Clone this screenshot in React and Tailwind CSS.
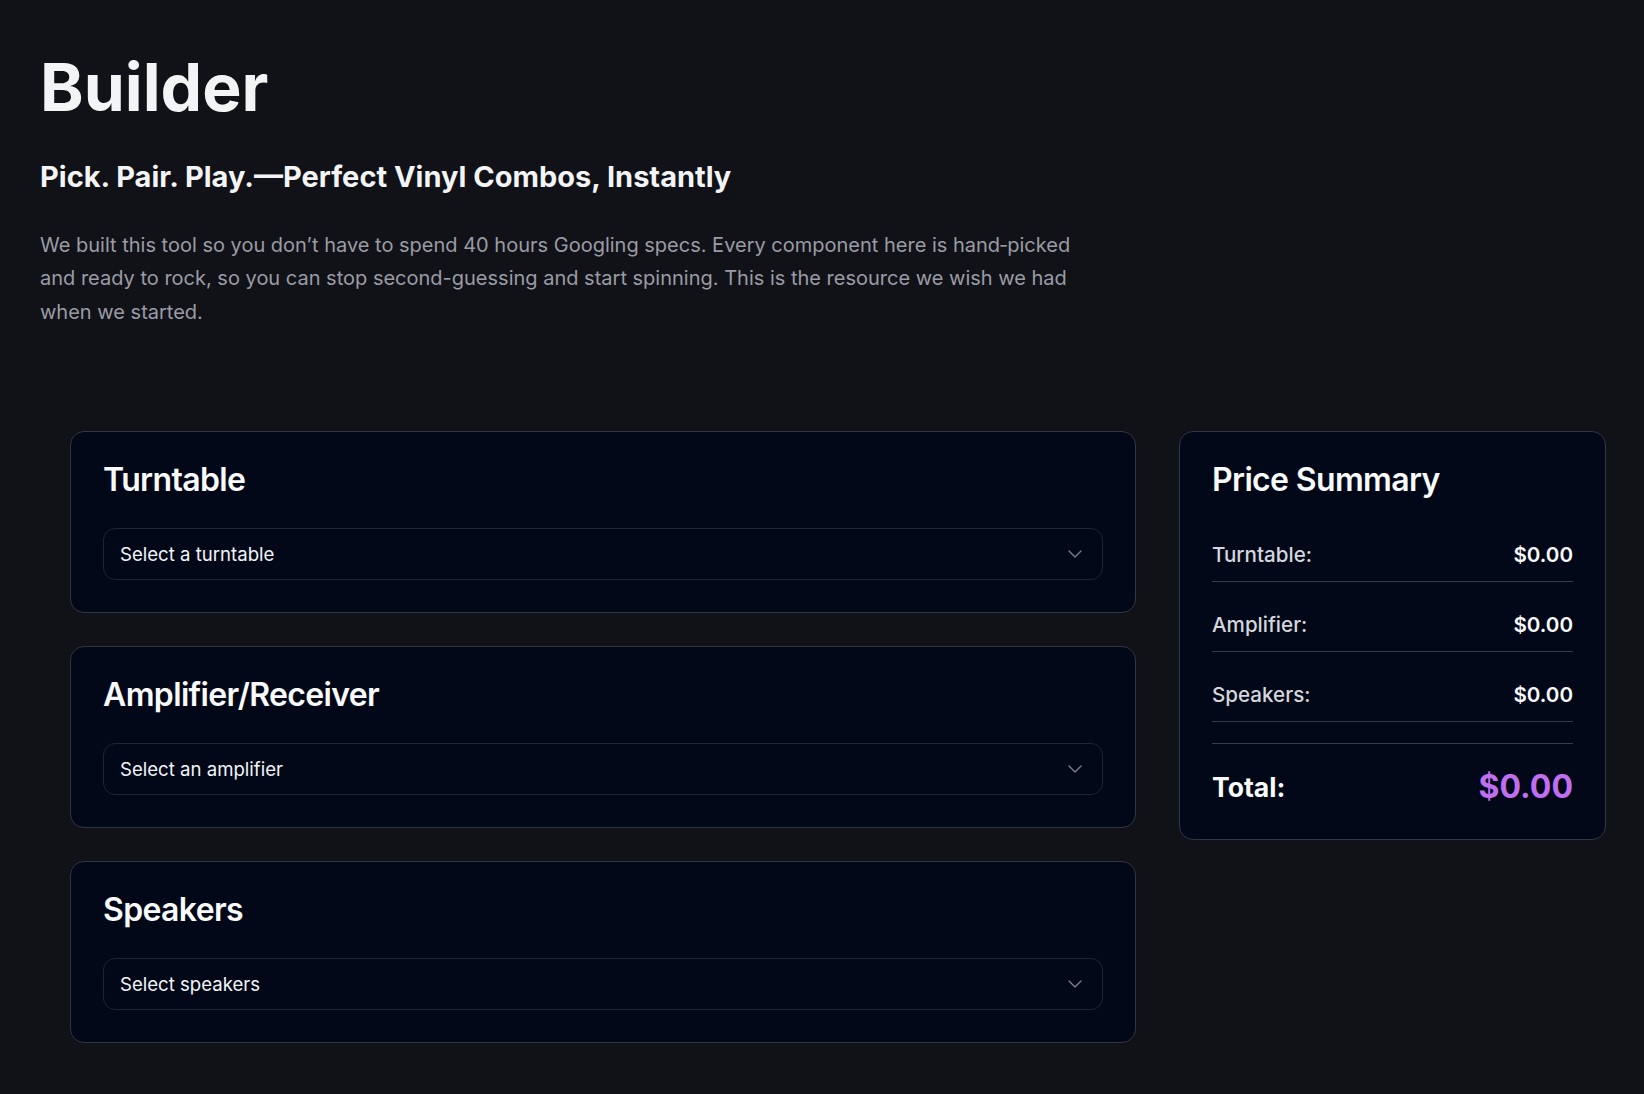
import React from "react";
import { ChevronDown } from "lucide-react";

function SelectCard({ title, placeholder }) {
  return (
    <div className="rounded-[14px] border border-[#2f3644] bg-[#020817] p-8">
      <h2 className="text-[32px] font-semibold leading-none tracking-[-0.02em] text-[#f8fafc]">
        {title}
      </h2>
      <div className="mt-8 flex h-[52px] items-center justify-between rounded-[12px] border border-[#1e2533] bg-[#020817] pl-4 pr-[15px]">
        <span className="text-[18.6px] leading-7 text-[#f1f5f9]">{placeholder}</span>
        <ChevronDown size={24} strokeWidth={1.25} className="text-[#9ca3af] opacity-80" />
      </div>
    </div>
  );
}

function Row({ label, value }) {
  return (
    <div className="flex items-center justify-between border-b border-[#353c4a] py-3 text-[20.6px] leading-[29px]">
      <span className="font-medium text-[#d4d7dd]">{label}</span>
      <span className="font-semibold text-[#f8fafc]">{value}</span>
    </div>
  );
}

export default function App() {
  return (
    <div
      className="min-h-screen bg-[#111217] pb-12"
      style={{ fontFamily: "Inter, 'Noto Sans', sans-serif" }}
    >
      <header className="px-10 pt-[54px]">
        <h1 className="text-[66px] font-bold leading-none text-[#f3f4f6]">Builder</h1>
        <h2 className="mt-[42px] text-[29px] font-bold leading-none text-[#f3f4f6]">
          Pick. Pair. Play.—Perfect Vinyl Combos, Instantly
        </h2>
        <p className="mt-[37.5px] max-w-[1045px] text-[20px] leading-[33.5px] text-[#9a9ca5]">
          We built this tool so you don’t have to spend 40 hours Googling specs. Every component here is
          hand&#8209;picked and ready to rock, so you can stop second-guessing and start spinning. This is the
          resource we wish we had when we started.
        </p>
      </header>

      <main className="mt-[101.5px] flex items-start gap-[43px] pl-[70px] pr-[38px]">
        <div className="flex flex-1 flex-col gap-[33px]">
          <SelectCard title="Turntable" placeholder="Select a turntable" />
          <SelectCard title="Amplifier/Receiver" placeholder="Select an amplifier" />
          <SelectCard title="Speakers" placeholder="Select speakers" />
        </div>

        <aside className="w-[427px] rounded-[14px] border border-[#2f3644] bg-[#020817] p-8">
          <h2 className="text-[32px] font-semibold leading-none tracking-[-0.02em] text-[#f8fafc]">
            Price Summary
          </h2>
          <div className="mt-8 flex flex-col gap-4">
            <Row label="Turntable:" value="$0.00" />
            <Row label="Amplifier:" value="$0.00" />
            <Row label="Speakers:" value="$0.00" />
          </div>
          <div className="mt-[21px] flex items-center justify-between border-t border-[#353c4a] pt-[23px]">
            <span className="text-[26.6px] font-bold leading-10 text-[#f8fafc]">Total:</span>
            <span className="text-[32px] font-bold leading-10 text-[#c06ef0]">$0.00</span>
          </div>
        </aside>
      </main>
    </div>
  );
}
